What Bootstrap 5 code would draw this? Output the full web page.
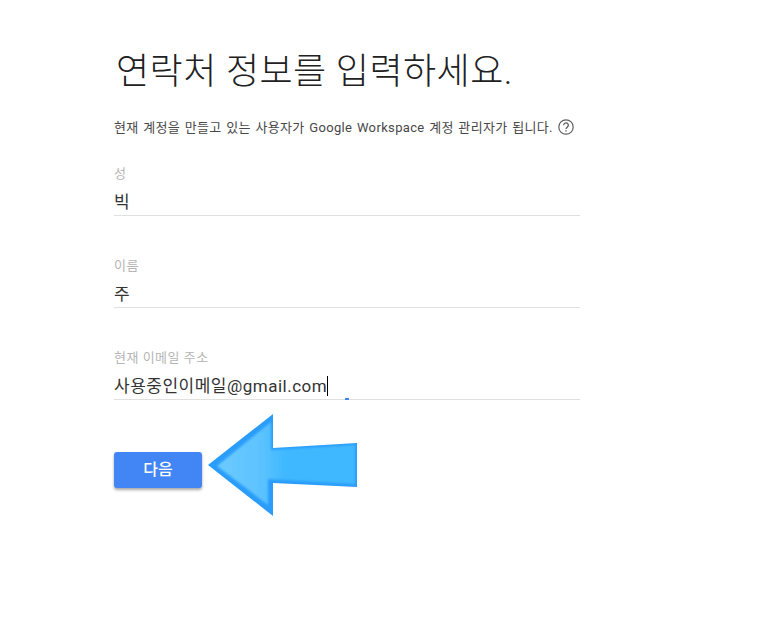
<!DOCTYPE html>
<html lang="ko">
<head>
    <meta charset="UTF-8">
    <title>연락처 정보</title>
    <link href="https://cdn.jsdelivr.net/npm/bootstrap@5.3.0/dist/css/bootstrap.min.css" rel="stylesheet">
    <style>
        body {
            font-family: Roboto, "Noto Sans CJK KR", sans-serif;
            color: #212121;
            background: #fff;
        }
        .page-wrap {
            width: 466px;
            min-height: 600px;
            margin-left: 114px;
            padding-top: 46px;
            position: relative;
        }
        .page-title {
            font-size: 36px;
            line-height: 52px;
            font-weight: 300;
            margin: 0 0 0 2px;
            letter-spacing: .45px;
            color: #212121;
        }
        .page-desc {
            font-size: 13px;
            line-height: 20px;
            letter-spacing: .35px;
            word-spacing: 1px;
            color: #484848;
            margin-top: 20px;
        }
        .help-icon { width: 18px; height: 18px; margin-left: 4px; margin-top: -3px; }
        .field-box { height: 62px; padding-top: 11px; border-bottom: 1px solid #e0e0e0; margin-bottom: 30px; }
        .field-box-last { margin-bottom: 52px; }
        .field-label { font-size: 13px; line-height: 18px; letter-spacing: .5px; color: #b5b5b5; }
        .field-value { font-size: 17px; line-height: 24px; letter-spacing: .5px; color: #333; margin-top: 7px; }
        .field-caret { display: inline-block; width: 1px; height: 20px; background: #000; vertical-align: -4px; }
        .focus-dot { position: absolute; left: 231px; bottom: -1px; width: 4px; height: 2px; background: #4285f4; }
        .next-btn {
            width: 88px;
            height: 36px;
            padding: 0;
            font-size: 16px;
            font-weight: 500;
            color: #fff;
            background: #4285f4;
            border: 0;
            border-radius: 3px;
            box-shadow: 0 2px 3px rgba(0, 0, 0, .35);
        }
        .arrow-mark { position: absolute; left: 94px; top: 414px; }
    </style>
</head>
<body>
    <div class="page-wrap">
        <h1 class="page-title">연락처 정보를 입력하세요.</h1>
        <div class="page-desc d-flex align-items-center mb-3">
            <span>현재 계정을 만들고 있는 사용자가 Google Workspace 계정 관리자가 됩니다.</span>
            <svg class="help-icon" viewBox="0 0 18 18" fill="none" stroke="#5f5f5f">
                <circle cx="9" cy="9" r="7.2" stroke-width="1.2"/>
                <path d="M6.7 7.2a2.3 2.3 0 1 1 3.6 1.9c-.8.5-1.3 1-1.3 2" stroke-width="1.3"/>
                <path d="M9 12.2v1.4" stroke-width="1.4"/>
            </svg>
        </div>
        <div class="field-box">
            <div class="field-label">성</div>
            <div class="field-value">빅</div>
        </div>
        <div class="field-box">
            <div class="field-label">이름</div>
            <div class="field-value">주</div>
        </div>
        <div class="field-box field-box-last position-relative">
            <div class="field-label">현재 이메일 주소</div>
            <div class="field-value">사용중인이메일@gmail.com<span class="field-caret"></span></div>
            <span class="focus-dot"></span>
        </div>
        <button type="button" class="btn next-btn">다음</button>
        <svg class="arrow-mark" width="150" height="104" viewBox="0 0 150 104">
            <defs>
                <linearGradient id="arrowFill" x1="0" y1="0" x2="1" y2="0">
                    <stop offset="0" stop-color="#6ccaff"/>
                    <stop offset=".32" stop-color="#5cc3ff"/>
                    <stop offset=".5" stop-color="#3fb8ff"/>
                    <stop offset="1" stop-color="#3fb8ff"/>
                </linearGradient>
                <filter id="arrowSoft" x="-5%" y="-5%" width="110%" height="110%">
                    <feGaussianBlur stdDeviation="1"/>
                </filter>
            </defs>
            <path d="M0 51 65 0V34L149 29V73L65 69V102Z" fill="#2a9dfb"/>
            <path d="M9 52 63 8V36L147 31V70L60 65V91Z" fill="url(#arrowFill)" filter="url(#arrowSoft)"/>
        </svg>
    </div>
    <script src="https://cdn.jsdelivr.net/npm/bootstrap@5.3.0/dist/js/bootstrap.bundle.min.js"></script>
</body>
</html>
